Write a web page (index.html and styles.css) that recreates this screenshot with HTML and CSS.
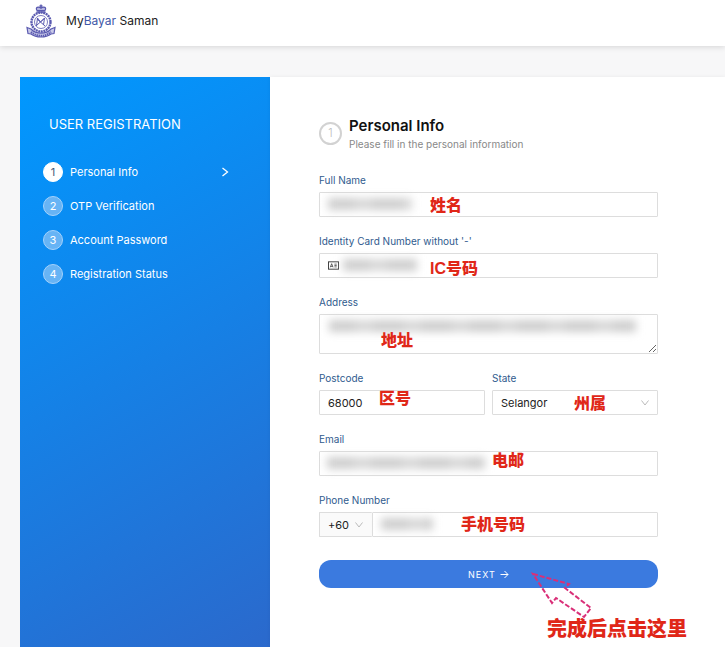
FILE: index.html
```html
<!DOCTYPE html>
<html lang="en">
<head>
    <meta charset="UTF-8">
    <meta name="viewport" content="width=device-width, initial-scale=1.0">
    <title>MyBayar Saman - User Registration</title>
    <link rel="stylesheet" href="styles.css">
</head>
<body>
    <header class="header">
        <svg class="logo" viewBox="0 0 30 34" fill="none" stroke="#5a5ab0">
            <!-- crown -->
            <path d="M11 6.500c-2-3 1-4.500 4-2.500 3-2 6-.5 4 2.500z" fill="#b5b5df" stroke-width="1.200"/>
            <path d="M15 .5v4M13.500 2h3M10.500 8h9" stroke-width="1.300"/>
            <!-- wreath -->
            <circle cx="15" cy="18" r="9.500" stroke-width="2.400" stroke-dasharray="2 .6"/>
            <circle cx="15" cy="18" r="6.500" stroke-width=".8"/>
            <path d="M10.500 22l1-8 3 4 4-4-1 7M11 15l8 7M19 14l-8 7" stroke-width="1"/>
            <!-- ribbon -->
            <path d="M1 23.500l4 1.500c5 5.500 15 5.500 20 0l4-1.500-1 6-3 .5c-5 4-15 4-20 0l-3-.5z" fill="#c9c9e8" stroke-width="1.200"/>
            <path d="M5 28c6 5 14 5 20 0" stroke-width="2" stroke-dasharray="1.400 .7"/>
        </svg>
        <div class="brand">My<span class="brand-blue">Bayar</span> Saman</div>
    </header>

    <main class="container">
        <nav class="sidebar">
            <h2 class="sidebar-title">USER REGISTRATION</h2>
            <ol class="steps">
                <li class="step active">
                    <span class="step-number">1</span>
                    <span class="step-name">Personal Info</span>
                    <svg class="step-arrow" viewBox="0 0 8 10"><path d="M1.500 1l5 4-5 4"/></svg>
                </li>
                <li class="step"><span class="step-number">2</span><span class="step-name">OTP Verification</span></li>
                <li class="step"><span class="step-number">3</span><span class="step-name">Account Password</span></li>
                <li class="step"><span class="step-number">4</span><span class="step-name">Registration Status</span></li>
            </ol>
        </nav>

        <form class="panel">
            <div class="panel-heading">
                <span class="panel-number">1</span>
                <div>
                    <h1 class="panel-title">Personal Info</h1>
                    <p class="panel-text">Please fill in the personal information</p>
                </div>
            </div>

            <div class="field">
                <label for="name">Full Name</label>
                <div class="control">
                    <input type="text" id="name">
                    <span class="hidden-value hidden-name"></span>
                    <span class="note note-name">姓名</span>
                </div>
            </div>

            <div class="field">
                <label for="ic">Identity Card Number without '-'</label>
                <div class="control">
                    <input type="text" id="ic">
                    <svg class="card-icon" viewBox="0 0 12 9" fill="none" stroke="#333">
                        <rect x=".5" y=".5" width="11" height="8"/>
                        <path d="M2.500 6.500l1.500-4 1.500 4M3 5.500h2M7 3h2.500M7 4.500h2.500M7 6h2.500" stroke-width=".8"/>
                    </svg>
                    <span class="hidden-value hidden-ic"></span>
                    <span class="note note-ic">IC号码</span>
                </div>
            </div>

            <div class="field">
                <label for="address">Address</label>
                <div class="control">
                    <textarea id="address"></textarea>
                    <span class="hidden-value hidden-address"></span>
                    <span class="note note-address">地址</span>
                </div>
            </div>

            <div class="row">
                <div class="field">
                    <label for="postcode">Postcode</label>
                    <div class="control">
                        <input type="text" id="postcode" value="68000">
                        <span class="note note-postcode">区号</span>
                    </div>
                </div>
                <div class="field">
                    <label for="state">State</label>
                    <div class="control">
                        <select id="state"><option>Selangor</option></select>
                        <svg class="chevron" viewBox="0 0 8 6"><path d="M.5 .5l3.500 4.500 3.500-4.500"/></svg>
                        <span class="note note-state">州属</span>
                    </div>
                </div>
            </div>

            <div class="field">
                <label for="email">Email</label>
                <div class="control">
                    <input type="email" id="email">
                    <span class="hidden-value hidden-email"></span>
                    <span class="note note-email">电邮</span>
                </div>
            </div>

            <div class="field">
                <label for="phone">Phone Number</label>
                <div class="control phone">
                    <div class="control prefix">
                        <select aria-label="Country code"><option>+60</option></select>
                        <svg class="chevron" viewBox="0 0 8 6"><path d="M.5 .5l3.500 4.500 3.500-4.500"/></svg>
                    </div>
                    <input type="tel" id="phone">
                    <span class="hidden-value hidden-phone"></span>
                    <span class="note note-phone">手机号码</span>
                </div>
            </div>

            <div class="control submit">
                <button type="submit" class="button">
                    NEXT
                    <svg class="next-arrow" viewBox="0 0 9 9"><path d="M.5 4.500h7.500M4.500 1l3.500 3.500L4.500 8"/></svg>
                </button>
                <svg class="pointer" viewBox="0 0 64 48"><path d="M3 3L39 13l-4 4 26 20-7 9-28-19-4 5z"/></svg>
                <span class="note note-submit">完成后点击这里</span>
            </div>
        </form>
    </main>
</body>
</html>
```

FILE: styles.css
```css
* {
    box-sizing: border-box;
}
body {
    display: flex;
    flex-direction: column;
    min-height: 100vh;
    margin: 0;
    background-color: #f7f7f8;
    color: #222;
    font-family: Inter, "Noto Sans CJK SC", sans-serif;
    font-size: 11px;
}
.header {
    display: flex;
    align-items: center;
    gap: 10px;
    height: 46px;
    padding: 0 26px 5px;
    background-color: #fff;
    box-shadow: 0 1px 6px rgba(0, 0, 0, 0.14);
}
.logo {
    width: 30px;
    height: 34px;
}
.brand {
    font-size: 12px;
}
.brand-blue {
    color: #3e57a7;
}
.container {
    display: flex;
    flex: 1;
    margin-top: 31px;
    padding-left: 20px;
}

/* Left side with the steps */
.sidebar {
    width: 250px;
    flex-shrink: 0;
    padding: 37px 23px;
    background: linear-gradient(150deg, #0098ff, #2b69cc);
    color: #fff;
}
.sidebar-title {
    margin: 0 6px 28px;
    font-size: 13px;
    line-height: 20px;
    font-weight: 400;
}
.steps {
    display: flex;
    flex-direction: column;
    gap: 14px;
    margin: 0;
    padding: 0;
    list-style: none;
}
.step {
    display: flex;
    align-items: center;
    gap: 7px;
    height: 20px;
    padding-right: 18px;
}
.step-number {
    width: 20px;
    height: 20px;
    border: 1px solid #a5d2fb;
    border-radius: 50%;
    background-color: #67b4f5;
    line-height: 18px;
    text-align: center;
}
.active .step-number {
    border-color: #fff;
    background-color: #fff;
    color: #435b78;
}
.step-name {
    flex: 1;
}
.step-arrow {
    width: 8px;
    height: 10px;
    fill: none;
    stroke: #fff;
    stroke-width: 1.3;
}

/* Form */
.panel {
    flex: 1;
    padding: 38px 67px 0 49px;
    background-color: #fff;
    box-shadow: 0 0 4px rgba(0, 0, 0, 0.06);
}
.panel-heading {
    display: flex;
    align-items: center;
    gap: 7px;
    margin-bottom: 20px;
}
.panel-number {
    width: 23px;
    height: 23px;
    border: 2px solid #d2d2d2;
    border-radius: 50%;
    color: #bbb;
    font-weight: 300;
    line-height: 19px;
    text-align: center;
}
.panel-title {
    margin: 0;
    color: #111;
    font-size: 15px;
    line-height: 21px;
    font-weight: 600;
}
.panel-text {
    margin: 0;
    color: #888;
    font-size: 10px;
    line-height: 16px;
}
.field {
    flex: 1;
    margin-bottom: 16px;
}
.field label {
    display: block;
    margin-bottom: 4px;
    color: #305b8e;
    font-size: 10px;
    line-height: 16px;
}
.row {
    display: flex;
    gap: 7px;
}
.control {
    position: relative;
}
input,
select,
textarea {
    display: block;
    width: 100%;
    height: 25px;
    padding: 0 8px;
    border: 1px solid #ddd;
    border-radius: 1px;
    background-color: #fff;
    color: #222;
    font-family: inherit;
    font-size: 11px;
    appearance: none;
}
textarea {
    height: 40px;
    resize: vertical;
}
.chevron {
    position: absolute;
    top: 10px;
    right: 9px;
    width: 8px;
    height: 6px;
    fill: none;
    stroke: #bbb;
    pointer-events: none;
}
.card-icon {
    position: absolute;
    top: 8px;
    left: 9px;
    width: 11px;
    height: 9px;
}
.phone {
    display: flex;
}
.prefix {
    width: 53px;
    flex-shrink: 0;
}
.prefix select {
    border-right: none;
    background-color: #fafafa;
}
.submit {
    padding-top: 7px;
}
.button {
    display: flex;
    align-items: center;
    justify-content: center;
    gap: 4px;
    width: 100%;
    height: 28px;
    border: none;
    border-radius: 12px;
    background-color: #3b7adf;
    color: #fff;
    font-family: inherit;
    font-size: 9px;
    letter-spacing: 1px;
    cursor: pointer;
}
.next-arrow {
    width: 9px;
    height: 9px;
    fill: none;
    stroke: #fff;
}

/* Blurred personal data */
.hidden-value {
    position: absolute;
    top: 6px;
    height: 12px;
    background: repeating-linear-gradient(90deg, #cecece 0 24px, #d8d8d8 30px 40px, #cecece 48px);
    filter: blur(4px);
}
.hidden-name {
    left: 9px;
    width: 84px;
}
.hidden-ic {
    left: 24px;
    width: 74px;
}
.hidden-address {
    left: 10px;
    width: 307px;
}
.hidden-email {
    left: 8px;
    width: 158px;
}
.hidden-phone {
    left: 62px;
    width: 52px;
}

/* Red notes over the form */
.note {
    position: absolute;
    color: #e02718;
    font-family: "Liberation Sans", "Noto Sans CJK SC", sans-serif;
    font-size: 16px;
    line-height: 20px;
    font-weight: 900;
    white-space: nowrap;
    pointer-events: none;
}
.note-name {
    top: 4px;
    left: 111px;
}
.note-ic {
    top: 6px;
    left: 111px;
}
.note-address {
    top: 17px;
    left: 62px;
}
.note-postcode {
    top: -1px;
    left: 60px;
}
.note-state {
    top: 4px;
    left: 82px;
}
.note-email {
    top: 0;
    left: 173px;
}
.note-phone {
    top: 3px;
    left: 142px;
}
.note-submit {
    top: 64px;
    right: -29px;
    font-size: 20px;
    line-height: 24px;
}
.pointer {
    position: absolute;
    top: 18px;
    right: 64px;
    width: 64px;
    height: 48px;
    fill: none;
    stroke: #d92f78;
    stroke-width: 2;
    stroke-dasharray: 5 2;
    pointer-events: none;
}
```
